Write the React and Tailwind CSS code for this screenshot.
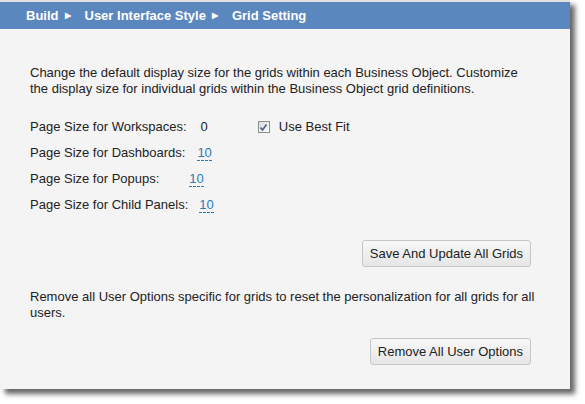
export default function App() {
  const rows = [
    { label: 'Page Size for Workspaces:', value: '0', gap: 'ml-[14px]', link: false },
    { label: 'Page Size for Dashboards:', value: '10', gap: 'ml-[12px]', link: true },
    { label: 'Page Size for Popups:', value: '10', gap: 'ml-[30px]', link: true },
    { label: 'Page Size for Child Panels:', value: '10', gap: 'ml-[11px]', link: true },
  ]

  return (
    <div className="w-[585px] h-[404px] bg-white font-['Liberation_Sans',Arial,sans-serif] text-[13px] text-[#222]">
      <div className="w-[570px] h-[389px] bg-[#f4f4f4] border-t-2 border-[#e2e2e2] shadow-[5px_5px_5px_rgba(0,0,0,0.6)] flex flex-col">
        <div className="h-[27px] bg-[#5b87bf] flex items-center pl-[26px] gap-[6px] text-white font-bold text-[13px]">
          <span>Build</span>
          <span className="text-[8px] mr-[8px]">▶</span>
          <span>User Interface Style</span>
          <span className="text-[8px] mr-[8px]">▶</span>
          <span>Grid Setting</span>
        </div>

        <div className="px-[30px] pt-[36px] leading-[16px]">
          <p>
            Change the default display size for the grids within each Business Object. Customize
            <br />
            the display size for individual grids within the Business Object grid definitions.
          </p>

          <div className="mt-[22px] flex flex-col gap-[10px]">
            {rows.map((r, i) => (
              <div key={i} className="flex items-center h-[16px]">
                <span>{r.label}</span>
                <span className={`${r.gap} ${r.link ? 'text-[#2a7ab8] border-b border-dashed border-[#2a7ab8] leading-[14px]' : ''}`}>
                  {r.value}
                </span>
                {i === 0 && (
                  <label className="flex items-center ml-[50px] gap-[9px]">
                    <span className="w-[12px] h-[12px] border border-[#8e8f8f] bg-gradient-to-br from-[#dcdcdc] to-[#fbfbfb] flex items-center justify-center">
                      <svg width="9" height="9" viewBox="0 0 9 9">
                        <path d="M1.5 4.5 L3.5 7 L7.5 1.5" fill="none" stroke="#4a5b8e" strokeWidth="1.6" />
                      </svg>
                    </span>
                    <span>Use Best Fit</span>
                  </label>
                )}
              </div>
            ))}
          </div>

          <div className="flex justify-end pr-[9px] mt-[27px]">
            <button className="h-[27px] px-[7px] rounded-[3px] border border-[#c6c6c6] bg-gradient-to-b from-[#f8f8f8] to-[#e6e6e6] text-[#222] text-[13px]">
              Save And Update All Grids
            </button>
          </div>

          <p className="mt-[22px]">
            Remove all User Options specific for grids to reset the personalization for all grids for all
            <br />
            users.
          </p>

          <div className="flex justify-end pr-[9px] mt-[17px]">
            <button className="h-[27px] px-[7px] rounded-[3px] border border-[#c6c6c6] bg-gradient-to-b from-[#f8f8f8] to-[#e6e6e6] text-[#222] text-[13px]">
              Remove All User Options
            </button>
          </div>
        </div>
      </div>
    </div>
  )
}
